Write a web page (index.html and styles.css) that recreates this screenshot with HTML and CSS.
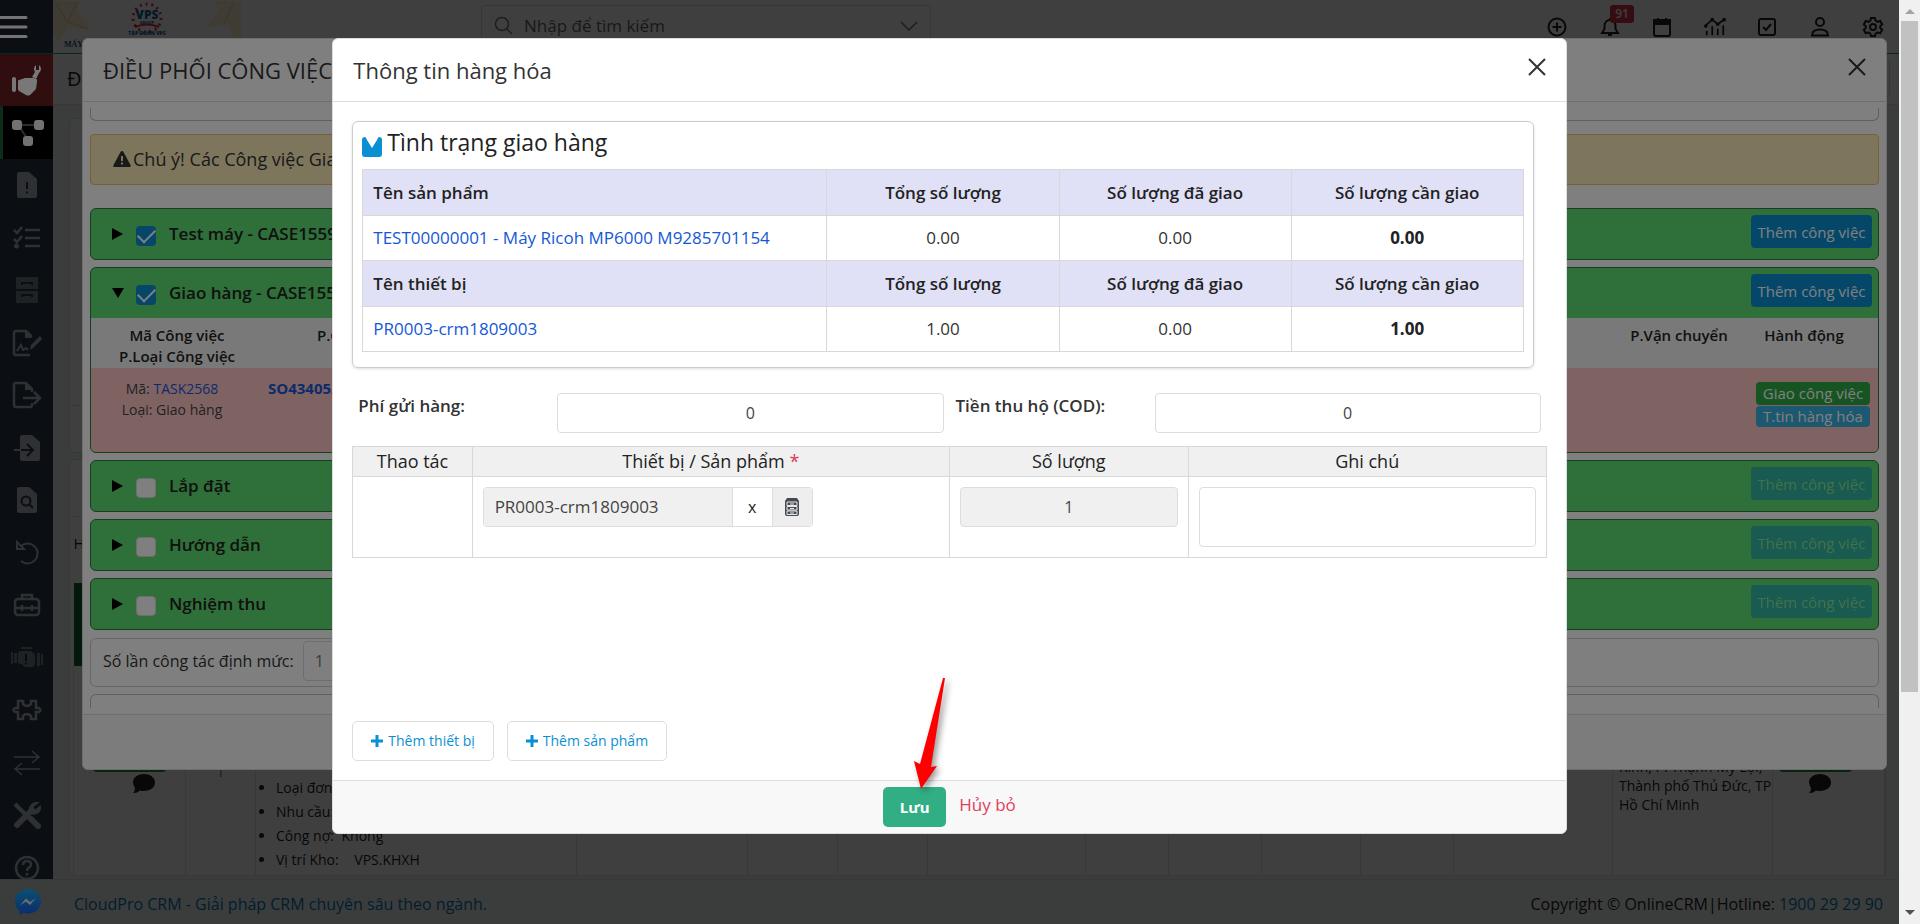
FILE: index.html
```html
<!DOCTYPE html>
<html lang="vi">
<head>
<meta charset="utf-8">
<title>Điều phối công việc</title>
<link rel="stylesheet" href="styles.css">
</head>
<body>
<div class="page">
  <header class="topbar">
    <button class="burger" aria-label="Menu"><svg width="28" height="24" viewBox="0 0 28 24" stroke="currentColor" stroke-width="3" stroke-linecap="round"><path d="M0 2.500h26M0 12h26M0 21.500h26"/></svg></button>
    <div class="logo">
      <svg width="188" height="53" viewBox="0 0 188 53">
        <path d="M0 1h28l-4 8 7 9 6 12-22-3-10 16-5-10zM188 1h-26l4 10-14 17 22-4 10 20 4-6z" fill="#fff1cc"/>
        <path d="M4 4l10 18M24 2l-9 20 20 7M180 4l-9 20" stroke="#dfcfa6" fill="none"/>
        <circle cx="94" cy="18" r="14" fill="none" stroke="#e02a3a" stroke-width="3" stroke-dasharray="2 4" pathLength="90"/>
        <path d="M82 27q12-5 24 0" fill="none" stroke="#e02a3a" stroke-width="2"/>
        <text x="94" y="19" text-anchor="middle" class="logo-name">VPS</text>
        <text x="94" y="24" text-anchor="middle" class="logo-group">GROUP</text>
        <text x="94" y="35" text-anchor="middle" class="logo-corp">TẬP ĐOÀN VPS</text>
        <text x="11" y="47" class="logo-line">MÁY</text>
      </svg>
    </div>
    <label class="search">
      <svg width="20" height="20" viewBox="0 0 20 20" fill="none" stroke="currentColor" stroke-width="1.500"><circle cx="8" cy="8" r="6.500"/><path d="M13 13l5 5"/></svg>
      <input type="text" placeholder="Nhập để tìm kiếm" aria-label="Nhập để tìm kiếm">
      <svg width="18" height="12" viewBox="0 0 18 12" fill="none" stroke="currentColor" stroke-width="1.500"><path d="M1 2l8 8 8-8"/></svg>
    </label>
    <nav class="tools">
      <button aria-label="Thêm"><svg viewBox="0 0 20 20"><circle cx="10" cy="10" r="8.500"/><path d="M10 5.500v9M5.500 10h9"/></svg></button>
      <button aria-label="Thông báo"><svg viewBox="0 0 20 20"><path d="M2 16h16l-2.500-4V8.500a5.500 5.500 0 0 0-11 0V12zM10 3V1"/><path d="M8 18h4"/></svg><span class="count">91</span></button>
      <button aria-label="Lịch"><svg viewBox="0 0 20 20"><rect x="2" y="3" width="16" height="16" rx="2"/><path d="M2 3h16v4H2z" fill="currentColor"/><path d="M6 1v3M14 1v3"/></svg></button>
      <button aria-label="Báo cáo"><svg viewBox="0 0 24 20"><path d="M1 9l8-7 6 5 8-6M3 14v5M9 9v10M15 12v7M21 8v11"/><circle cx="2" cy="9" r="1"/><circle cx="9" cy="2" r="1"/><circle cx="15" cy="7" r="1"/><circle cx="22" cy="2" r="1"/></svg></button>
      <button aria-label="Công việc"><svg viewBox="0 0 20 20"><rect x="2" y="2" width="16" height="16" rx="2"/><path d="M6 10l3 3 5-6"/></svg></button>
      <button aria-label="Tài khoản"><svg viewBox="0 0 20 20"><circle cx="10" cy="5" r="4"/><path d="M2 18.500q0-6 8-6t8 6z"/></svg></button>
      <button aria-label="Cài đặt"><svg viewBox="0 0 20 20"><path d="M8 1h4l.6 2.600 2 1.200 2.600-.8 2 3.400-2 1.800v1.800l2 1.800-2 3.400-2.600-.8-2 1.200L12 19H8l-.6-2.400-2-1.200-2.600.8-2-3.400 2-1.800V9.200l-2-1.800 2-3.400 2.600.8 2-1.200z"/><circle cx="10" cy="10" r="3"/></svg></button>
    </nav>
  </header>

  <div class="workspace">
    <nav class="sidebar">
      <a href="#" class="hot" aria-label="Dịch vụ"><svg width="32" height="32" viewBox="0 0 32 32" fill="currentColor"><rect x="1" y="13" width="4" height="15" rx="2"/><path d="M7 17q0-1 1-1l6-2h8q5 0 4 4l-1 7-6 6q-2 1-4 0l-7-4q-1-1-1-2z"/><path d="M21 13l3-5a5 5 0 0 1 1-7v5h3V1a5 5 0 0 1 0 8l-3 6z"/></svg></a>
      <a href="#" class="current" aria-label="Điều phối"><svg width="32" height="28" viewBox="0 0 32 28"><path d="M6 6h21M6 6l11 16" stroke="#5a5a5a" stroke-width="2"/><g fill="currentColor"><rect x="0" y="1" width="10" height="10" rx="3"/><rect x="22" y="1" width="10" height="10" rx="3"/><rect x="11" y="17" width="10" height="10" rx="3"/></g></svg></a>
      <a href="#" aria-label="Sự cố"><svg width="20" height="26" viewBox="0 0 20 26"><path d="M2 0h10l8 7v17q0 2-2 2H2q-2 0-2-2V2q0-2 2-2z" fill="currentColor"/><path d="M10 10v7M10 19.500v2" stroke="#161e28" stroke-width="2"/></svg></a>
      <a href="#" aria-label="Danh sách"><svg width="28" height="24" viewBox="0 0 28 24" fill="none" stroke="currentColor" stroke-width="2.500"><path d="M1 4l3 3 5-6M1 13l3 3 5-6M12 4h15M12 12h15M12 20h15"/><circle cx="3.500" cy="20" r="2.500" fill="currentColor" stroke="none"/></svg></a>
      <a href="#" class="faint" aria-label="Kho"><svg width="24" height="26" viewBox="0 0 24 26"><path d="M2 0h20q1 0 1 1v11H1V1q0-1 1-1zM1 14h22v11q0 1-1 1H2q-1 0-1-1z" fill="currentColor"/><path d="M7 8V6h10v2M7 20v-2h10v2" fill="none" stroke="#161e28" stroke-width="2"/></svg></a>
      <a href="#" aria-label="Hợp đồng"><svg width="30" height="28" viewBox="0 0 30 28" fill="none" stroke="currentColor" stroke-width="2.500"><path d="M20 8l-6-6H4Q2 2 2 4v20q0 2 2 2h14"/><path d="M13 2v7h7z" fill="currentColor" stroke="none"/><path d="M5 22l4-6 2 5 3-2 2 2" stroke-width="2"/><path d="M18 21l1-5L28 7l2 3-9 9z" fill="currentColor" stroke="none"/></svg></a>
      <a href="#" aria-label="Xuất kho"><svg width="30" height="28" viewBox="0 0 30 28" fill="none" stroke="currentColor" stroke-width="2.500"><path d="M20 11V8l-6-6H4Q2 2 2 4v20q0 2 2 2h14q2 0 2-2v-2M11 17h17M22 11l6 6-6 6"/><path d="M13 2v7h7z" fill="currentColor" stroke="none"/></svg></a>
      <a href="#" aria-label="Nhập kho"><svg width="26" height="26" viewBox="0 0 26 26"><path d="M8 0h10l8 7v17q0 2-2 2H8q-2 0-2-2V2q0-2 2-2z" fill="currentColor"/><path d="M7 15h11M13 9l6 6-6 6" fill="none" stroke="#161e28" stroke-width="2"/><path d="M0 15h6" stroke="currentColor" stroke-width="2"/></svg></a>
      <a href="#" aria-label="Tra cứu"><svg width="20" height="26" viewBox="0 0 20 26"><path d="M2 0h10l8 7v17q0 2-2 2H2q-2 0-2-2V2q0-2 2-2z" fill="currentColor"/><circle cx="9" cy="14" r="4.500" fill="none" stroke="#161e28" stroke-width="2"/><path d="M12 17l4 4" stroke="#161e28" stroke-width="2"/></svg></a>
      <a href="#" aria-label="Hoàn tác"><svg width="24" height="26" viewBox="0 0 24 26" fill="none" stroke="currentColor" stroke-width="2"><path d="M6 6a10 10 0 1 1 0 15M2 2v7h7z"/></svg></a>
      <a href="#" aria-label="Thiết bị"><svg width="28" height="24" viewBox="0 0 28 24" fill="none" stroke="currentColor" stroke-width="2.500"><rect x="2" y="6" width="24" height="16" rx="3"/><path d="M9 6V2h10v4M2 15h24M9 12v6M19 12v6"/></svg></a>
      <a href="#" class="faint" aria-label="Máy"><svg width="32" height="22" viewBox="0 0 32 22"><path d="M0 5h2v12H0zM3 6h3v10H3zM7 7q0-3 3-3h9q2 0 5 4v8q0 4-4 4h-6q-1 0-3-3H8q-1 0-1-2zM26 6h3v13h-3zM30 7h2v11h-2zM10 0h11v2H10z" fill="currentColor"/><path d="M15 7v7M15 15.500v2" stroke="#11161c" stroke-width="2"/></svg></a>
      <a href="#" aria-label="Tiện ích"><svg width="32" height="22" viewBox="0 0 32 22" fill="none" stroke="currentColor" stroke-width="2.500"><path d="M7 2h5v3q4 4 8 0V2h5v7h3q3 2 0 4h-3v7h-5v-3q-4-4-8 0v3H7v-7H4q-3-2 0-4h3z"/></svg></a>
      <a href="#" aria-label="Luân chuyển"><svg width="28" height="26" viewBox="0 0 28 26" fill="none" stroke="currentColor" stroke-width="1.500"><path d="M1 7h25M19 1l7 6-7 6M27 19H2M9 13l-7 6 7 6"/></svg></a>
      <a href="#" aria-label="Công cụ"><svg width="28" height="28" viewBox="0 0 28 28" fill="none" stroke="currentColor"><path d="M2 3l4 4 12 12" stroke-width="4"/><path d="M18 18l7 7" stroke-width="6" stroke-linecap="round"/><path d="M4 24l13-13" stroke-width="6" stroke-linecap="round"/><path d="M24 2l-5 4 3 4 5-4a6 6 0 0 1-10 5 7 7 0 0 1 7-9z" fill="currentColor" stroke-width="2"/></svg></a>
      <a href="#" aria-label="Trợ giúp"><svg width="26" height="26" viewBox="0 0 26 26" fill="none" stroke="currentColor" stroke-width="2.500"><circle cx="13" cy="13" r="11"/><path d="M9 10q0-4 4-4t4 3.500q0 2-2.500 3.500-1.500 1-1.500 3M13 18v2.500"/></svg></a>
    </nav>

    <main class="main">
      <div class="modulebar"><h1>ĐI</h1><button class="module-btn" aria-label="Tùy chọn"></button></div>
      <section class="filter"><span>▼</span></section>
      <section class="listing">
        <div class="listing-bar"></div>
        <table class="orders">
          <thead>
            <tr class="labels"><th>H</th><th></th><th></th><th></th><th></th><th></th><th></th><th></th><th></th><th></th><th></th><th></th><th></th><th></th></tr>
            <tr class="band"><td colspan="14"></td></tr>
          </thead>
          <tbody>
            <tr class="order">
              <td class="act"><span class="act-btn"></span><svg width="24" height="20" viewBox="0 0 24 20"><path d="M12 0c6.600 0 11 3.600 11 8.500S18.600 17 12 17q-2 0-4-.5Q5 19.500 1 19q2-2 2-5-2-2.500-2-5.500C1 3.600 5.400 0 12 0z"/></svg></td>
              <td class="num">1</td>
              <td><ul><li>Loại đơn:</li><li>Nhu cầu:</li><li>Công nợ: <span>Không</span></li><li>Vị trí Kho: <span class="stock">VPS.KHXH</span></li></ul></td>
              <td></td><td></td><td></td><td></td><td></td><td></td><td></td><td></td><td></td>
              <td class="addr">Kinh, P. Thạnh Mỹ Lợi, Thành phố Thủ Đức, TP Hồ Chí Minh</td>
              <td class="act act-end"><span class="act-btn"></span><svg width="24" height="20" viewBox="0 0 24 20"><path d="M12 0c6.600 0 11 3.600 11 8.500S18.600 17 12 17q-2 0-4-.5Q5 19.500 1 19q2-2 2-5-2-2.500-2-5.500C1 3.600 5.400 0 12 0z"/></svg></td>
            </tr>
          </tbody>
        </table>
      </section>
    </main>
  </div>

  <footer class="pagefoot">
    <a href="#" class="messenger" aria-label="Messenger"><svg width="26" height="26" viewBox="0 0 26 26"><defs><linearGradient id="m" x1="0" y1="0" x2="0" y2="1"><stop offset="0" stop-color="#14a0e0"/><stop offset="1" stop-color="#1458e0"/></linearGradient></defs><path d="M13 0C5.500 0 0 5.500 0 12.500c0 4 2 7 4.500 9V26l4-2.200q2 .7 4.500.7c7.500 0 13-5 13-12S20.500 0 13 0z" fill="url(#m)"/><path d="M5 16.500l6-7 4 3.500 6-4-6 7-4-3.500z" fill="#ddd"/></svg></a>
    <a href="#">CloudPro CRM - Giải pháp CRM chuyên sâu theo ngành.</a>
    <p>Copyright © OnlineCRM|Hotline: <a href="#">1900 29 29 90</a></p>
  </footer>

  <div class="backdrop"></div>

  <section class="dialog dispatch">
    <header class="dialog-head"><h2>ĐIỀU PHỐI CÔNG VIỆC</h2><button class="close" aria-label="Đóng"><svg width="18" height="18" viewBox="0 0 18 18" stroke="currentColor" stroke-width="2"><path d="M1 1l16 16M17 1L1 17"/></svg></button></header>
    <div class="dispatch-body">
      <div class="frame tail"></div>
      <p class="notice"><svg width="18" height="16" viewBox="0 0 18 16"><path d="M9 0q1 0 1.500 1l7 13q.8 2-1 2H1.500q-1.800 0-1-2l7-13Q8 0 9 0z" fill="currentColor"/><path d="M9 5v5M9 11.500v2" stroke="#faecb8" stroke-width="2"/></svg>Chú ý! Các Công việc Giao</p>
      <div class="panel"><div class="panel-head"><i class="caret"></i><input type="checkbox" id="c1" checked><label for="c1">Test máy - CASE1559</label><button>Thêm công việc</button></div></div>
      <div class="panel">
        <div class="panel-head"><i class="caret open"></i><input type="checkbox" id="c2" checked><label for="c2">Giao hàng - CASE1559</label><button>Thêm công việc</button></div>
        <table class="tasks">
          <thead><tr><th>Mã Công việc<br>P.Loại Công việc</th><th class="order-col">P.C</th><th>P.Vận chuyển</th><th>Hành động</th></tr></thead>
          <tbody><tr><td>Mã: <a href="#">TASK2568</a><br>Loại: Giao hàng</td><td class="order-no"><a href="#">SO43405/</a></td><td></td><td class="ops"><button class="assign">Giao công việc</button><button class="goods-btn">T.tin hàng hóa</button></td></tr></tbody>
        </table>
      </div>
      <div class="panel"><div class="panel-head"><i class="caret"></i><input type="checkbox" id="c3"><label for="c3">Lắp đặt</label><button disabled>Thêm công việc</button></div></div>
      <div class="panel"><div class="panel-head"><i class="caret"></i><input type="checkbox" id="c4"><label for="c4">Hướng dẫn</label><button disabled>Thêm công việc</button></div></div>
      <div class="panel"><div class="panel-head"><i class="caret"></i><input type="checkbox" id="c5"><label for="c5">Nghiệm thu</label><button disabled>Thêm công việc</button></div></div>
      <div class="frame quota"><label for="quota">Số lần công tác định mức:</label><input id="quota" type="text" value="1"></div>
      <div class="frame lead"></div>
    </div>
    <footer class="dispatch-foot"></footer>
  </section>

  <div class="backdrop upper"></div>

  <section class="dialog goods">
    <header class="dialog-head"><h2>Thông tin hàng hóa</h2><button class="close" aria-label="Đóng"><svg width="18" height="18" viewBox="0 0 18 18" stroke="currentColor" stroke-width="2"><path d="M1 1l16 16M17 1L1 17"/></svg></button></header>
    <div class="goods-body">
      <section class="status">
        <h3><svg width="20" height="20" viewBox="0 0 20 20"><path d="M0 3Q0 0 3 0q1 0 2 3l5 8 5-8q1-3 2-3 3 0 3 3v14q0 3-3 3H3q-3 0-3-3z" fill="#0a8fd3"/></svg>Tình trạng giao hàng</h3>
        <table class="delivery">
          <tr><th>Tên sản phẩm</th><th>Tổng số lượng</th><th>Số lượng đã giao</th><th>Số lượng cần giao</th></tr>
          <tr><td><a href="#">TEST00000001 - Máy Ricoh MP6000 M9285701154</a></td><td>0.00</td><td>0.00</td><td>0.00</td></tr>
          <tr><th>Tên thiết bị</th><th>Tổng số lượng</th><th>Số lượng đã giao</th><th>Số lượng cần giao</th></tr>
          <tr><td><a href="#">PR0003-crm1809003</a></td><td>1.00</td><td>0.00</td><td>1.00</td></tr>
        </table>
      </section>
      <div class="fees">
        <label for="fee">Phí gửi hàng:</label><input id="fee" type="text" value="0">
        <label for="cod">Tiền thu hộ (COD):</label><input id="cod" type="text" value="0">
      </div>
      <table class="items">
        <thead><tr><th>Thao tác</th><th>Thiết bị / Sản phẩm <b>*</b></th><th>Số lượng</th><th>Ghi chú</th></tr></thead>
        <tbody><tr>
          <td></td>
          <td><div class="picker"><input type="text" value="PR0003-crm1809003" aria-label="Thiết bị" readonly><button aria-label="Xóa">x</button><button class="pick" aria-label="Chọn"><svg width="14" height="18" viewBox="0 0 14 18"><path d="M2 0h10l2 3v13q0 2-2 2H2q-2 0-2-2V3z" fill="#454a52"/><path d="M2 4h10v3.500H2zM2 8.500h10v3.500H2zM2 13h10v3.500H2z" fill="none" stroke="#e8e8e8"/><path d="M5 6h4M5 10.500h4M5 15h4" stroke="#e8e8e8"/></svg></button></div></td>
          <td><input class="qty" type="text" value="1" aria-label="Số lượng" readonly></td>
          <td><textarea aria-label="Ghi chú"></textarea></td>
        </tr></tbody>
      </table>
      <div class="adders">
        <button><svg width="12" height="12" viewBox="0 0 12 12" stroke="currentColor" stroke-width="3"><path d="M6 0v12M0 6h12"/></svg>Thêm thiết bị</button>
        <button><svg width="12" height="12" viewBox="0 0 12 12" stroke="currentColor" stroke-width="3"><path d="M6 0v12M0 6h12"/></svg>Thêm sản phẩm</button>
      </div>
    </div>
    <footer class="goods-foot">
      <div class="save-wrap"><button class="save">Lưu</button>
      <svg class="pointer" width="46" height="122" viewBox="0 0 46 122"><path d="M34 3L11 89l-6-3 7 28 16-23-6 1L36 3z" fill="#f00"/></svg></div>
      <a href="#">Hủy bỏ</a>
    </footer>
  </section>
</div>
<div class="scroll"><i class="up"></i><i class="thumb"></i><i class="down"></i></div>
</body>
</html>
```
FILE: styles.css
```css
* { box-sizing: border-box; }
body { margin: 0; display: flex; height: 100vh; overflow: hidden; font: 16px/24px "Open Sans", "Noto Sans", sans-serif; color: #222; background: #fff; }
a { text-decoration: none; color: #1558d6; }
h1, h2, h3, p, ul { margin: 0; font-weight: 400; }
button, input, textarea { font: inherit; color: inherit; margin: 0; }
button { border: 0; background: none; padding: 0; }
svg { flex: none; }

.page { position: relative; flex: 1; min-width: 0; display: flex; flex-direction: column; overflow: hidden; }
.backdrop { position: absolute; inset: 0; background: rgba(0, 0, 0, .5); z-index: 1; }
.backdrop.upper { z-index: 4; }

/* top bar */
.topbar { display: flex; height: 54px; flex: none; border-bottom: 1px solid #23a077; background: #fff; }
.burger { position: relative; z-index: 2; width: 53px; background: #161e28; color: #e8e8e8; text-align: left; }
.burger svg { display: block; }
.logo { width: 428px; }
.logo text { font-family: "Open Sans", sans-serif; font-weight: 800; fill: #17639b; }
.logo .logo-name { font-size: 12px; }
.logo .logo-group { font-size: 4px; }
.logo .logo-corp { font-size: 5px; }
.logo .logo-line { font: 700 8px "Liberation Serif", serif; fill: #1c5286; }
.search { display: flex; align-items: center; gap: 8px; width: 450px; height: 42px; margin-top: 5px; padding: 0 12px; border: 1px solid #ddd; border-radius: 4px; color: #777; }
.search input { flex: 1; min-width: 0; border: 0; outline: 0; background: none; font-size: 17px; }
.search input::placeholder { color: #666; }
.tools { margin-left: auto; display: grid; grid-template-columns: repeat(3, 52px 53px) 53px; }
.tools button { position: relative; color: #222; }
.tools svg { width: 22px; height: 20px; display: block; margin: auto; fill: none; stroke: currentColor; stroke-width: 2; }
.count { position: absolute; left: 27px; top: 5px; width: 24px; border-radius: 3px; background: #d9304f; color: #fff; font-size: 12px; font-weight: 600; line-height: 18px; }

/* side navigation */
.workspace { flex: 1; min-height: 0; display: flex; overflow: hidden; }
.sidebar { position: relative; z-index: 2; width: 53px; flex: none; overflow: hidden; background: #161e28; display: grid; grid-template-rows: repeat(8, 52px 53px); }
.sidebar a { display: grid; place-items: center; color: #5c6168; }
.sidebar .hot { background: #601a1c; color: #f0f0f0; }
.sidebar .current { background: #000; color: #e4e4e4; border-left: 3px solid #185a34; }
.sidebar .faint { color: #3e444b; }

/* page behind the dialogs */
.main { flex: 1; min-width: 0; background: #eef4f1; display: flex; flex-direction: column; }
.modulebar { flex: none; height: 51px; background: #fff; border-bottom: 1px solid #dfe3e1; display: flex; align-items: center; justify-content: space-between; padding: 0 9px 0 14px; }
.modulebar h1 { font-size: 20px; }
.module-btn { width: 60px; height: 38px; border: 1px solid #ddd; border-radius: 4px; }
.filter { flex: none; height: 335px; margin: 13px 13px 0 16px; background: linear-gradient(#ddd, #ddd) 2px 286px / 100% 1px no-repeat #fff; border: 1px solid #dcdfdd; border-radius: 6px; padding: 6px 9px; }
.listing { flex: 1; margin: 6px 13px 3px 16px; background: #fff; border: 1px solid #dcdfdd; border-radius: 6px 6px 0 0; padding: 0 0 0 3px; min-height: 0; overflow: hidden; }
.listing-bar { height: 57px; border-bottom: 1px solid #ddd; }
.orders { width: 100%; table-layout: fixed; border-collapse: collapse; font-size: 14px; line-height: 19px; }
.orders th, .orders td { padding: 0; font-weight: 400; text-align: left; vertical-align: top; }
.orders th:nth-child(1) { width: 112px; } .orders th:nth-child(2) { width: 70px; } .orders th:nth-child(3) { width: 321px; }
.orders th:nth-child(4) { width: 171px; } .orders th:nth-child(5), .orders th:nth-child(6) { width: 90px; }
.orders th:nth-child(7) { width: 158px; } .orders th:nth-child(8) { width: 83px; } .orders th:nth-child(9), .orders th:nth-child(11) { width: 93px; }
.orders th:nth-child(10) { width: 99px; } .orders th:nth-child(12) { width: 159px; } .orders th:nth-child(13) { width: 160px; }
.orders .labels th { height: 66px; padding-top: 17px; font-size: 15px; }
.band td { height: 83px; background: #0b6430; }
.order td { border: solid #e2e2e2; border-width: 0 1px; height: 211px; }
.orders .act { padding: 80px 0 0 19px; }
.orders .act-end { padding-left: 6px; }
.act-btn { display: block; width: 73px; height: 26px; margin-bottom: 2px; border-radius: 4px; background: #1c9246; }
.act svg { margin-left: 39px; fill: #222; }
.act-end svg { margin-left: 29px; }
.orders .num { text-align: center; padding-top: 96px; color: #a60; }
.orders ul { padding: 110px 0 0 20px; line-height: 24px; font-size: 14px; }
.orders li span { margin-left: 4px; }
.orders li .stock { margin-left: 12px; }
.orders .addr { padding: 91px 0 0 6px; }
.pagefoot { flex: none; height: 45px; display: flex; align-items: center; background: #eef4f1; border-top: 1px solid #dadfdd; padding: 3px 16px 0 15px; }
.pagefoot a { color: #0a78b8; }
.pagefoot p { margin-left: auto; }
.messenger { position: relative; z-index: 2; width: 59px; height: 30px; }

/* dialogs */
.dialog { position: absolute; background: #fff; border: 1px solid #ddd; border-radius: 6px; overflow: hidden; }
.dialog-head { display: flex; align-items: center; justify-content: space-between; height: 63px; padding: 0 20px; border-bottom: 1px solid #ddd; }
.dialog-head h2 { font-size: 22px; color: #333; }
.close { padding-bottom: 6px; color: #333; }
.close svg { display: block; }

.dispatch { z-index: 3; left: 82px; right: 12px; top: 38px; }
.dispatch-body { height: calc(100vh - 311px); padding: 6px 7px; display: flex; flex-direction: column; overflow: hidden; border-bottom: 1px solid #ddd; }
.frame { flex: none; border: 1px solid #cbbcbc; border-radius: 6px; }
.frame.tail { height: 13px; border-top: 0; border-radius: 0 0 6px 6px; }
.frame.lead { height: 14px; margin-top: 7px; border-bottom: 0; border-radius: 6px 6px 0 0; }
.notice { flex: none; display: flex; align-items: center; gap: 2px; height: 51px; margin: 13px 0 16px; padding: 0 0 2px 22px; background: #faecb8; border: 1px solid #ecc06a; border-radius: 4px; font-size: 18px; color: #333; }
.panel { flex: none; margin-top: 7px; border: 1px solid #2f7d42; border-radius: 6px; background: #5ede72; overflow: hidden; }
.panel-head { display: flex; align-items: center; height: 50px; padding: 0 6px 0 21px; }
.panel-head label { margin-left: 13px; font-weight: 600; font-size: 17px; }
.panel-head button, .ops button { border-radius: 4px; color: #fff; font-size: 15px; }
.panel-head button { margin: 0 0 5px auto; width: 121px; height: 33px; background: #0a8fd3; }
.panel-head button:disabled { opacity: .5; color: #a8e8c0; }
.caret { width: 22px; }
.caret::before { content: ""; display: block; width: 0; border: solid transparent; border-width: 6px 0 6px 11px; border-left-color: #000; }
.caret.open::before { border-width: 10px 6px 0; border-color: #000 transparent; }
.panel-head input { appearance: none; width: 20px; height: 20px; margin: 4px 0 0 2px; border-radius: 4px; background: #fff; border: 1px solid #ddd; }
.panel-head input:checked { border: 0; background: #0a8fd3; display: grid; place-items: center; }
.panel-head input:checked::before { content: ""; width: 15px; height: 8px; border: solid #fff; border-width: 0 0 2px 2px; transform: translateY(-2px) rotate(-45deg); }
.tasks { width: 100%; table-layout: fixed; border-collapse: collapse; font-size: 15px; line-height: 21px; text-align: center; }
.tasks th { padding: 7px 0 1px; vertical-align: top; font-weight: 600; background: #f2f2f2; }
.tasks td { height: 84px; padding: 10px 10px 0 0; vertical-align: top; background: #ffc6c6; color: #444; font-size: 14px; }
.tasks th:nth-child(1) { width: 172px; }
.tasks th:nth-child(3) { width: 102px; }
.tasks th:nth-child(4) { width: 148px; }
.tasks .order-col { text-align: left; padding-left: 54px; }
.tasks .order-no { text-align: left; padding-left: 5px; font-weight: 700; font-size: 15px; }
.ops button { display: block; width: 114px; margin-left: auto; margin-right: 8px; }
.tasks .ops { padding: 14px 0 0; }
.assign { height: 23px; background: #2ca845; margin-bottom: 1px; }
.goods-btn { height: 21px; background: #38b0e0; }
.ops button.assign, .ops button.goods-btn { line-height: 21px; }
.quota { height: 49px; margin-top: 8px; border-color: #ccc; display: flex; align-items: center; padding: 0 12px; }
.quota label { font-size: 16px; color: #333; padding-bottom: 3px; }
.quota input { width: 80px; height: 40px; margin: 0 0 4px 9px; padding: 0 11px; border: 1px solid #ddd; border-radius: 4px; color: #777; }
.dispatch-foot { height: 54px; background: #f8f8f8; }

.goods { z-index: 5; top: 38px; left: 17.5%; right: 17.5%; }
.goods-body { padding: 19px 19px; }
.status { margin-right: 13px; padding: 5px 9px 15px 9px; border: 1px solid #ccc; border-radius: 6px; box-shadow: 0 1px 3px #ddd; }
.status h3 { display: flex; align-items: center; gap: 5px; height: 30px; margin-bottom: 12px; font-size: 23px; }
.status h3 svg { margin-top: 9px; }
.delivery, .items { width: 100%; table-layout: fixed; border-collapse: collapse; text-align: center; }
.delivery { font-size: 17px; }
.delivery th, .delivery td, .items th, .items td { border: 1px solid #d8d8d8; }
.delivery th { height: 46px; background: #e0e0f6; font-weight: 600; padding: 0 10px; }
.delivery td { height: 45px; padding: 0 10px; color: #333; }
.delivery th:first-child, .delivery td:first-child { width: 40%; text-align: left; }
.delivery td:last-child { font-weight: 700; color: #222; }
.fees { display: grid; grid-template-columns: 1fr 2fr 1fr 2fr; margin: 25px 0 13px; }
.fees label { padding: 1px 6px; font-weight: 600; font-size: 17px; color: #333; }
.fees input { min-width: 0; height: 40px; margin: 0 6px; text-align: center; }
.goods input, textarea { border: 1px solid #ddd; border-radius: 4px; background: #fff; color: #444; outline: 0; }
.items th { height: 30px; padding: 0 0 1px; background: #f0f0f0; font-weight: 400; font-size: 18px; }
.items th:nth-child(1) { width: 10%; } .items th:nth-child(2) { width: 40%; } .items th:nth-child(3) { width: 20%; }
.items th b { color: #dc3a55; font-weight: 400; }
.items td { padding: 10px; vertical-align: top; }
.picker { display: flex; width: 330px; height: 40px; border: 1px solid #ddd; border-radius: 4px; overflow: hidden; }
.picker input { flex: 1; min-width: 0; border: 0; border-radius: 0; padding: 0 11px; background: #f0f0f0; font-size: 17px; }
.picker button { width: 40px; border-left: 1px solid #ddd; }
.picker .pick { background: #eee; }
.picker svg { display: block; margin: auto; }
.goods .qty { width: 100%; height: 40px; text-align: center; background: #f0f0f0; }
textarea { display: block; width: 100%; height: 60px; resize: none; }
.adders { display: flex; gap: 13px; margin-top: 163px; }
.adders button { display: flex; align-items: center; gap: 5px; height: 40px; padding: 0 18px; border: 1px solid #ddd; border-radius: 5px; color: #0a8fd3; font-size: 14px; }
.goods-foot { display: flex; justify-content: center; gap: 13px; height: 53px; padding-top: 6px; border-top: 1px solid #ddd; background: #f8f8f8; }
.goods-foot a { color: #e0405c; font-size: 17px; line-height: 36px; }
.save-wrap { position: relative; }
.save { width: 63px; height: 40px; border-radius: 5px; background: #32ae84; color: #fff; font-weight: 700; font-size: 15px; }
.pointer { position: absolute; left: 26px; top: -112px; filter: drop-shadow(3px 3px 3px rgba(0, 0, 0, .4)); }

/* window scroll bar */
.scroll { flex: none; width: 21px; padding: 9px 2px; background: #f0f0f0; display: flex; flex-direction: column; align-items: center; }
.thumb { width: 17px; height: calc(100% - 235px); margin-top: 7px; background: #c1c1c1; }
.up, .down { width: 0; border: solid transparent; border-width: 0 5px 5px; border-bottom-color: #a3a3a3; }
.down { margin-top: auto; border-width: 5px 5px 0; border-color: #505050 transparent; }
```
